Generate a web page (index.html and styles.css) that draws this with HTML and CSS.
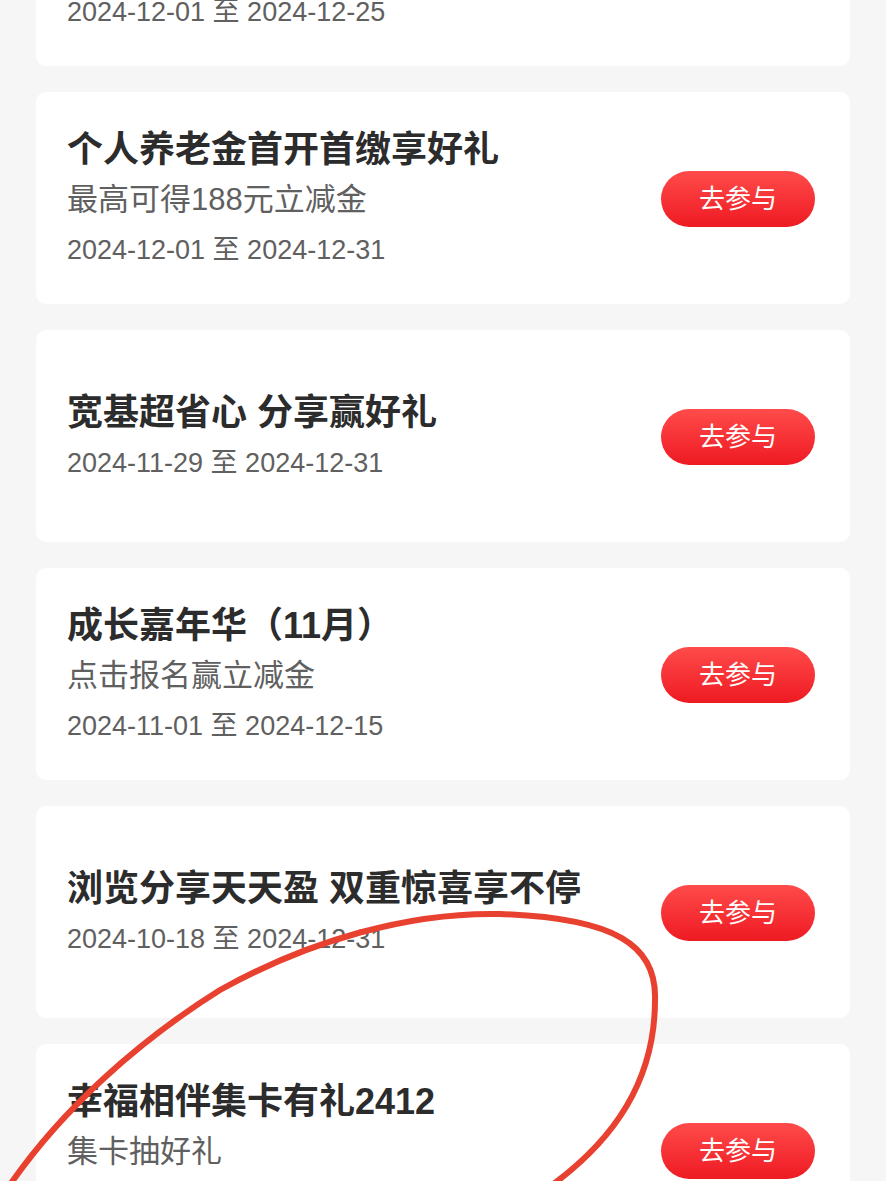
FILE: index.html
```html
<!DOCTYPE html>
<html lang="zh-CN">
<head>
<meta charset="UTF-8" />
<meta name="viewport" content="width=device-width, initial-scale=1" />
<title>活动列表</title>
<link rel="stylesheet" href="styles.css">
</head>
<body>

<div class="list">
  <div class="card">
    <div class="info">
      <div class="title">月末理财狂欢节</div>
      <div class="sub">最高可得88元立减金</div>
      <div class="date">2024-12-01 至 2024-12-25</div>
    </div>
    <a class="join" href="#">去参与</a>
  </div>

  <div class="card">
    <div class="info">
      <div class="title">个人养老金首开首缴享好礼</div>
      <div class="sub">最高可得188元立减金</div>
      <div class="date">2024-12-01 至 2024-12-31</div>
    </div>
    <a class="join" href="#">去参与</a>
  </div>

  <div class="card">
    <div class="info">
      <div class="title">宽基超省心 分享赢好礼</div>
      <div class="date">2024-11-29 至 2024-12-31</div>
    </div>
    <a class="join" href="#">去参与</a>
  </div>

  <div class="card">
    <div class="info">
      <div class="title">成长嘉年华（11月）</div>
      <div class="sub">点击报名赢立减金</div>
      <div class="date">2024-11-01 至 2024-12-15</div>
    </div>
    <a class="join" href="#">去参与</a>
  </div>

  <div class="card">
    <div class="info">
      <div class="title">浏览分享天天盈 双重惊喜享不停</div>
      <div class="date">2024-10-18 至 2024-12-31</div>
    </div>
    <a class="join" href="#">去参与</a>
  </div>

  <div class="card">
    <div class="info">
      <div class="title">幸福相伴集卡有礼2412</div>
      <div class="sub">集卡抽好礼</div>
      <div class="date">2024-12-01 至 2024-12-31</div>
    </div>
    <a class="join" href="#">去参与</a>
  </div>
</div>

<!-- hand-drawn marker circle -->
<svg class="mark" width="886" height="1181" viewBox="0 0 886 1181">
  <path d="M548 1188 C615 1140 655 1080 655 1000 C657 945 615 918 500 914 C410 912 310 940 220 990 C140 1040 60 1110 5 1192"
        fill="none" stroke="#e8412f" stroke-width="6" stroke-linecap="round" />
</svg>

</body>
</html>
```

FILE: styles.css
```css
body {
  margin: 0;
  background: #f6f6f6;
  font-family: "Liberation Sans", "Noto Sans CJK SC", sans-serif;
}
.list {
  margin-top: -146px;
  padding: 0 36px;
  display: flex;
  flex-direction: column;
  gap: 26px;
}
.card {
  height: 212px;
  background: #fff;
  border-radius: 10px;
  padding: 4px 35px 0 31px;
  box-sizing: border-box;
  display: flex;
  align-items: center;
  justify-content: space-between;
}
.title {
  font-size: 36px;
  line-height: 50px;
  font-weight: bold;
  color: #2c2c2c;
}
.sub {
  font-size: 31px;
  line-height: 50px;
  color: #606060;
}
.date {
  font-size: 27px;
  line-height: 50px;
  color: #606060;
}
.join {
  flex: none;
  width: 154px;
  height: 56px;
  margin-top: -2px;
  border-radius: 28px;
  background: linear-gradient(#ff4b4b, #ee1a22);
  color: #fff;
  font-size: 26px;
  line-height: 56px;
  text-align: center;
  text-decoration: none;
}
.mark {
  position: absolute;
  top: 0;
  left: 0;
  pointer-events: none;
}
```
